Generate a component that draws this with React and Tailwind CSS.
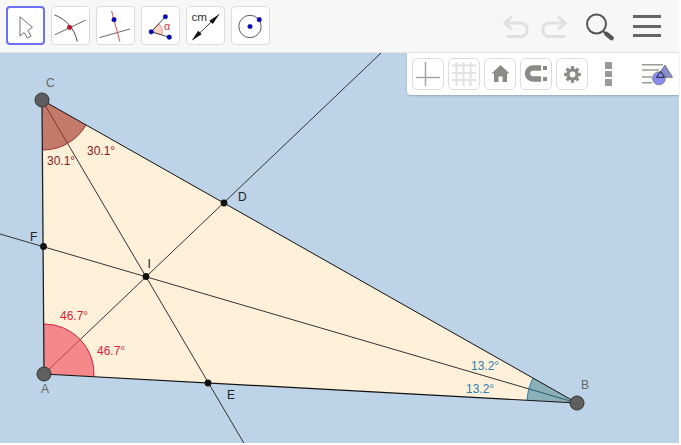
const sans = { fontFamily: '"Liberation Sans", Arial, sans-serif' };

function Dot({ x, y, r = 2.4, fill = "#0000d8" }) {
  return <circle cx={x} cy={y} r={r} fill={fill} stroke="#333" strokeWidth="0.4" />;
}

function ToolIcon({ name }) {
  if (name === "move")
    return (
      <svg width="38" height="38" viewBox="0 0 38 38">
        <path d="M13 9 V30 L17.5 26 L21 32 L25 30 L21.5 24 L26.5 20.5 Z" fill="#fff" stroke="#666" strokeWidth="1" strokeLinejoin="round" />
      </svg>
    );
  if (name === "intersect")
    return (
      <svg width="38" height="38" viewBox="0 0 38 38">
        <path d="M2.5 7.5 C14 12 23 21 26 35" fill="none" stroke="#333" strokeWidth="0.9" />
        <path d="M3 28 L34.5 13" stroke="#555" strokeWidth="0.9" />
        <Dot x={18} y={20.5} fill="#d2142c" />
      </svg>
    );
  if (name === "perp")
    return (
      <svg width="38" height="38" viewBox="0 0 38 38">
        <path d="M2.5 31 L34 22" stroke="#555" strokeWidth="0.9" />
        <path d="M15 3.5 L23.5 35" stroke="#e0303c" strokeWidth="0.9" />
        <Dot x={17.5} y={12.5} />
      </svg>
    );
  if (name === "angle")
    return (
      <svg width="38" height="38" viewBox="0 0 38 38">
        <path d="M9.5 25 L17 16.5 A12 12 0 0 1 20.5 28 Z" fill="#f6d5c4" stroke="#e0606c" strokeWidth="0.7" />
        <path d="M9.5 25 L24 9.5 M9.5 25 L28 30.5" stroke="#333" strokeWidth="0.9" />
        <Dot x={9.5} y={25} />
        <Dot x={24} y={9.5} />
        <Dot x={28} y={30.5} />
        <text x="22.5" y="23" fontSize="11" fill="#e0303c" style={sans}>α</text>
      </svg>
    );
  if (name === "measure")
    return (
      <svg width="38" height="38" viewBox="0 0 38 38">
        <path d="M6 33 L33 7" stroke="#222" strokeWidth="0.9" />
        <path d="M33 7 L23 13.5 L26.5 17 Z M5 34 L15 27.5 L11.5 24 Z" fill="#111" />
        <text x="4.5" y="14" fontSize="12" fill="#333" style={sans}>cm</text>
      </svg>
    );
  return (
    <svg width="38" height="38" viewBox="0 0 38 38">
      <circle cx="18.5" cy="19.5" r="11.5" fill="none" stroke="#444" strokeWidth="0.9" />
      <Dot x={18.5} y={19.5} />
      <Dot x={28} y={12.5} />
    </svg>
  );
}

function StyleIcon({ name }) {
  if (name === "axes")
    return (
      <svg width="30" height="30" viewBox="0 0 30 30">
        <path d="M12.5 3 V27 M3 18.5 H27" stroke="#a4a4a4" strokeWidth="1.5" />
      </svg>
    );
  if (name === "grid")
    return (
      <svg width="30" height="30" viewBox="0 0 30 30">
        <path d="M7.5 3 V27 M14.5 3 V27 M21.5 3 V27 M3 6.5 H27 M3 14 H27 M3 21 H27" stroke="#e2e2e2" strokeWidth="2" />
      </svg>
    );
  if (name === "home")
    return (
      <svg width="30" height="30" viewBox="0 0 30 30">
        <path d="M15.5 6 L24.5 14.5 H22 V23 H17.5 V17.5 H13.5 V23 H9 V14.5 H6.5 Z" fill="#8a8a86" />
      </svg>
    );
  if (name === "magnet")
    return (
      <svg width="30" height="30" viewBox="0 0 30 30">
        <path d="M20 9 H12 A5.5 5.5 0 0 0 12 20 H20" fill="none" stroke="#8a8a86" strokeWidth="5.5" />
        <path d="M22 7 H26 V11 H22 Z M22 18 H26 V22 H22 Z" fill="#8a8a86" />
      </svg>
    );
  return (
    <svg width="30" height="30" viewBox="0 0 30 30">
      <circle cx="15.5" cy="15.5" r="4.5" fill="none" stroke="#8a8a86" strokeWidth="3.2" />
      {[0, 45, 90, 135, 180, 225, 270, 315].map((deg) => (
        <rect key={deg} x="13.8" y="7.2" width="3.4" height="3.2" fill="#8a8a86" transform={`rotate(${deg} 15.5 15.5)`} />
      ))}
    </svg>
  );
}

const tools = ["move", "intersect", "perp", "angle", "measure", "circle"];
const styleBtns = ["axes", "grid", "home", "magnet", "gear"];

const A = [44, 374];
const B = [577, 403];
const C = [42, 100];

const labels = [
  ["C", 46, 87, "#666"],
  ["A", 41, 393, "#666"],
  ["B", 581, 389, "#666"],
  ["D", 238, 201, "#222"],
  ["E", 227, 399, "#222"],
  ["F", 30, 241, "#222"],
  ["I", 147.5, 267.5, "#222"],
  ["30.1°", 87, 155, "#8b1a1a"],
  ["30.1°", 47, 165, "#8b1a1a"],
  ["46.7°", 60, 320, "#dc1e3c"],
  ["46.7°", 97, 355, "#dc1e3c"],
  ["13.2°", 471, 370, "#2a7fb0"],
  ["13.2°", 466, 393, "#2a7fb0"],
];

export default function App() {
  return (
    <div className="w-[681px] h-[445px] bg-white overflow-hidden" style={sans}>
      <div className="w-[679px] h-[443px] flex flex-col">
        <div className="h-[53px] shrink-0 flex items-center justify-between bg-[#f7f7f7] border-b border-[#e2e2e2] pl-[6px] pr-[18px]">
          <div className="flex gap-[6px] -mt-[1px]">
            {tools.map((t, i) => (
              <div
                key={t}
                className={
                  i === 0
                    ? "w-[39px] h-[39px] rounded-[4px] bg-white border-2 border-[#6b70f5] flex items-center justify-center"
                    : "w-[39px] h-[39px] rounded-[4px] bg-white border border-[#dcdcdc] flex items-center justify-center"
                }
              >
                <ToolIcon name={t} />
              </div>
            ))}
          </div>
          <div className="flex items-center gap-[19px]">
            <svg width="64" height="30" viewBox="0 0 64 30">
              <path d="M3 12 H19 A7 7 0 0 1 19 25.5 H4 M9 5.5 L2 12 L9 18.5" fill="none" stroke="#e0e0e0" strokeWidth="3" />
              <path d="M61 12 H45 A7 7 0 0 0 45 25.5 H62 M55 5.5 L62 12 L55 18.5" fill="none" stroke="#e0e0e0" strokeWidth="3" />
            </svg>
            <svg width="28" height="30" viewBox="0 0 28 30">
              <circle cx="10.5" cy="13" r="9.5" fill="none" stroke="#555" strokeWidth="2" />
              <path d="M17 20 L20 23" stroke="#555" strokeWidth="2" />
              <path d="M20.5 23 L25.5 27" stroke="#555" strokeWidth="4.5" strokeLinecap="round" />
            </svg>
            <div className="flex flex-col gap-[6.5px]">
              <div className="w-[28px] h-[3px] bg-[#666666]" />
              <div className="w-[28px] h-[3px] bg-[#666666]" />
              <div className="w-[28px] h-[3px] bg-[#666666]" />
            </div>
          </div>
        </div>

        <div className="relative flex-1 bg-[#bdd3e7]">
          <svg width="679" height="390" viewBox="0 53 679 390" className="block">
            <polygon points={`${A} ${B} ${C}`} fill="#fff0d9" />
            <path d="M44 374 L381 53" stroke="#333" strokeWidth="1" />
            <path d="M42 100 L245 445" stroke="#333" strokeWidth="1" />
            <path d="M577 403 L0 234" stroke="#333" strokeWidth="1" />

            <path d="M42 100 L86 125 A50 50 0 0 1 43 150 Z" fill="#a33b2e" fillOpacity="0.65" />
            <path d="M86 125 A50 50 0 0 1 43 150" fill="none" stroke="#a03030" strokeWidth="1" />
            <path d="M44 374 L44 324 A50 50 0 0 1 94 376.5 Z" fill="#f0505f" fillOpacity="0.65" />
            <path d="M44 324 A50 50 0 0 1 94 376.5" fill="none" stroke="#dc1e3c" strokeWidth="1" />
            <path d="M577 403 L533 378 A50 50 0 0 0 527 400 Z" fill="#2c7d9c" fillOpacity="0.55" />
            <path d="M533 378 A50 50 0 0 0 527 400" fill="none" stroke="#2a7fb0" strokeWidth="1" />

            <path d="M44 374 L42 100" stroke="#222" strokeWidth="1.3" />
            <path d="M42 100 L577 403" stroke="#111" strokeWidth="1" />
            <path d="M44 374 L577 403" stroke="#111" strokeWidth="1.2" />

            {[[224, 203], [208, 383], [43.5, 246.5], [146, 276.5]].map(([x, y]) => (
              <circle key={x} cx={x} cy={y} r="3.4" fill="#111" />
            ))}
            {[A, B, C].map(([x, y]) => (
              <circle key={x} cx={x} cy={y} r="7" fill="#5f5f5f" stroke="#333" strokeWidth="1" />
            ))}

            {labels.map(([t, x, y, c]) => (
              <text key={t + x} x={x} y={y} fontSize="12" fill={c} style={sans}>
                {t}
              </text>
            ))}
          </svg>

          <div className="absolute top-0 right-0 w-[272px] h-[42px] bg-white rounded-bl-[4px] shadow-[0_1px_2px_rgba(0,0,0,0.2)] flex items-center pl-[5px]">
            <div className="flex gap-[4px]">
              {styleBtns.map((b) => (
                <div key={b} className="w-[32px] h-[32px] rounded-[5px] border border-[#dcdcdc] flex items-center justify-center">
                  <StyleIcon name={b} />
                </div>
              ))}
            </div>
            <div className="ml-[17px] flex flex-col gap-[2px]">
              <div className="w-[6.5px] h-[6.5px] bg-[#9a9a96]" />
              <div className="w-[6.5px] h-[6.5px] bg-[#9a9a96]" />
              <div className="w-[6.5px] h-[6.5px] bg-[#9a9a96]" />
            </div>
            <svg width="32" height="30" viewBox="0 0 32 30" className="ml-[30px]">
              <path d="M0 5.7 H21 M0 11 H17 M0 18 H10 M0 23.7 H10" stroke="#9a9a96" strokeWidth="1.5" />
              <path d="M23 6 L30.5 18.3 H14.5 Z" fill="#8a8cd0" stroke="#666" strokeWidth="0.8" />
              <circle cx="17" cy="19.3" r="6.5" fill="#8a8cf0" stroke="#777" strokeWidth="0.7" />
              <path d="M18.5 12.5 L22.5 18.3 H14.5 Z" fill="none" stroke="#222" strokeWidth="1" />
            </svg>
          </div>
        </div>
      </div>
    </div>
  );
}
